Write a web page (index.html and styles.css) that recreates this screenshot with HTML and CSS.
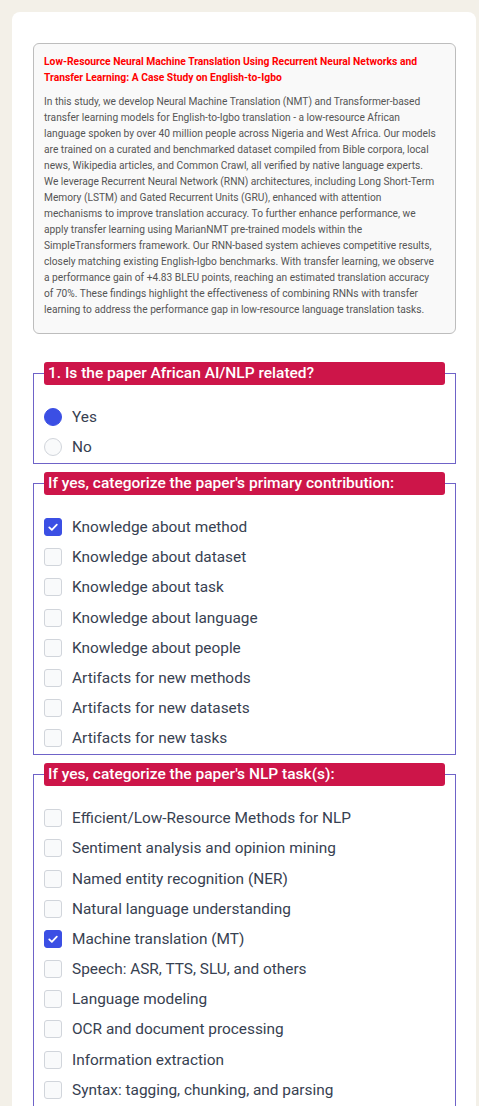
FILE: index.html
```html
<!DOCTYPE html>
<html lang="en">
<head>
<meta charset="utf-8">
<title>Paper annotation</title>
<link rel="stylesheet" href="styles.css">
</head>
<body>
<div class="card">
  <div class="abstract">
    <h2 class="abstract-title">Low-Resource Neural Machine Translation Using Recurrent Neural Networks and Transfer Learning: A Case Study on English-to-Igbo</h2>
    <p class="abstract-text">
      <span class="line">In this study, we develop Neural Machine Translation (NMT) and Transformer-based</span>
      <span class="line">transfer learning models for English-to-Igbo translation - a low-resource African</span>
      <span class="line">language spoken by over 40 million people across Nigeria and West Africa. Our models</span>
      <span class="line">are trained on a curated and benchmarked dataset compiled from Bible corpora, local</span>
      <span class="line">news, Wikipedia articles, and Common Crawl, all verified by native language experts.</span>
      <span class="line">We leverage Recurrent Neural Network (RNN) architectures, including Long Short-Term</span>
      <span class="line">Memory (LSTM) and Gated Recurrent Units (GRU), enhanced with attention</span>
      <span class="line">mechanisms to improve translation accuracy. To further enhance performance, we</span>
      <span class="line">apply transfer learning using MarianNMT pre-trained models within the</span>
      <span class="line">SimpleTransformers framework. Our RNN-based system achieves competitive results,</span>
      <span class="line">closely matching existing English-Igbo benchmarks. With transfer learning, we observe</span>
      <span class="line">a performance gain of +4.83 BLEU points, reaching an estimated translation accuracy</span>
      <span class="line">of 70%. These findings highlight the effectiveness of combining RNNs with transfer</span>
      <span class="line">learning to address the performance gap in low-resource language translation tasks.</span>
    </p>
  </div>

  <fieldset class="group">
    <legend class="group-title">1. Is the paper African AI/NLP related?</legend>
    <div class="options">
      <label class="option"><span class="radio checked"></span><span class="opt-label">Yes</span></label>
      <label class="option"><span class="radio"></span><span class="opt-label">No</span></label>
    </div>
  </fieldset>

  <fieldset class="group">
    <legend class="group-title">If yes, categorize the paper's primary contribution:</legend>
    <div class="options">
      <label class="option"><span class="box checked"><svg viewBox="0 0 18 18" width="18" height="18"><path d="M4.8 9.4l2.9 2.8 5.6-5.8" fill="none" stroke="#fff" stroke-width="2" stroke-linecap="round" stroke-linejoin="round"/></svg></span><span class="opt-label">Knowledge about method</span></label>
      <label class="option"><span class="box"></span><span class="opt-label">Knowledge about dataset</span></label>
      <label class="option"><span class="box"></span><span class="opt-label">Knowledge about task</span></label>
      <label class="option"><span class="box"></span><span class="opt-label">Knowledge about language</span></label>
      <label class="option"><span class="box"></span><span class="opt-label">Knowledge about people</span></label>
      <label class="option"><span class="box"></span><span class="opt-label">Artifacts for new methods</span></label>
      <label class="option"><span class="box"></span><span class="opt-label">Artifacts for new datasets</span></label>
      <label class="option"><span class="box"></span><span class="opt-label">Artifacts for new tasks</span></label>
    </div>
  </fieldset>

  <fieldset class="group">
    <legend class="group-title">If yes, categorize the paper's NLP task(s):</legend>
    <div class="options">
      <label class="option"><span class="box"></span><span class="opt-label">Efficient/Low-Resource Methods for NLP</span></label>
      <label class="option"><span class="box"></span><span class="opt-label">Sentiment analysis and opinion mining</span></label>
      <label class="option"><span class="box"></span><span class="opt-label">Named entity recognition (NER)</span></label>
      <label class="option"><span class="box"></span><span class="opt-label">Natural language understanding</span></label>
      <label class="option"><span class="box checked"><svg viewBox="0 0 18 18" width="18" height="18"><path d="M4.8 9.4l2.9 2.8 5.6-5.8" fill="none" stroke="#fff" stroke-width="2" stroke-linecap="round" stroke-linejoin="round"/></svg></span><span class="opt-label">Machine translation (MT)</span></label>
      <label class="option"><span class="box"></span><span class="opt-label">Speech: ASR, TTS, SLU, and others</span></label>
      <label class="option"><span class="box"></span><span class="opt-label">Language modeling</span></label>
      <label class="option"><span class="box"></span><span class="opt-label">OCR and document processing</span></label>
      <label class="option"><span class="box"></span><span class="opt-label">Information extraction</span></label>
      <label class="option"><span class="box"></span><span class="opt-label">Syntax: tagging, chunking, and parsing</span></label>
    </div>
  </fieldset>
</div>
</body>
</html>
```

FILE: styles.css
```css
* { box-sizing: border-box; }

html, body {
  margin: 0;
  padding: 0;
}

body {
  background: #f3f0e8;
  font-family: Roboto, "Liberation Sans", Arial, sans-serif;
  padding: 12px 3px 0 12px;
  height: 1106px;
  overflow: hidden;
}

.card {
  background: #ffffff;
  border-radius: 8px;
  padding: 31px 20px 40px 21px;
  min-height: 1200px;
}

.abstract {
  background: #f9f9f9;
  border: 1px solid #bdbdbd;
  border-radius: 6px;
  padding: 10px 8px 15px 10px;
  margin-bottom: 28px;
}

.abstract-title {
  margin: 0 0 8px;
  color: #ff0000;
  font-size: 10.3px;
  line-height: 16px;
  font-weight: 700;
}

.abstract-text {
  margin: 0;
  color: #555555;
  font-size: 10.2px;
  line-height: 16px;
}

.abstract-text .line {
  display: block;
  white-space: nowrap;
}

.group {
  margin: 0 0 7.6px;
  padding: 0 10px 1px;
  border: 1px solid #6f63c8;
  min-width: 0;
}

.group-title {
  width: 100%;
  padding: 0 4px;
  height: 23px;
  line-height: 23px;
  background: #cd1549;
  color: #ffffff;
  font-size: 15.5px;
  font-weight: 500;
  border-radius: 3px;
  white-space: nowrap;
  overflow: hidden;
}

.options {
  display: flex;
  flex-direction: column;
  padding-top: 17px;
}

.option {
  display: flex;
  align-items: center;
  gap: 10px;
  height: 30.2px;
  color: #374151;
  font-size: 15.4px;
}

.radio,
.box {
  flex: none;
  width: 18px;
  height: 18px;
  border: 1px solid #d1d5db;
  background: #f9fafb;
  display: flex;
  align-items: center;
  justify-content: center;
}

.radio { border-radius: 50%; }
.box { border-radius: 3px; }

.radio.checked,
.box.checked {
  background: #3b4fe4;
  border-color: #3b4fe4;
}

.box svg { display: block; }

.opt-label { line-height: 18px; }
```
